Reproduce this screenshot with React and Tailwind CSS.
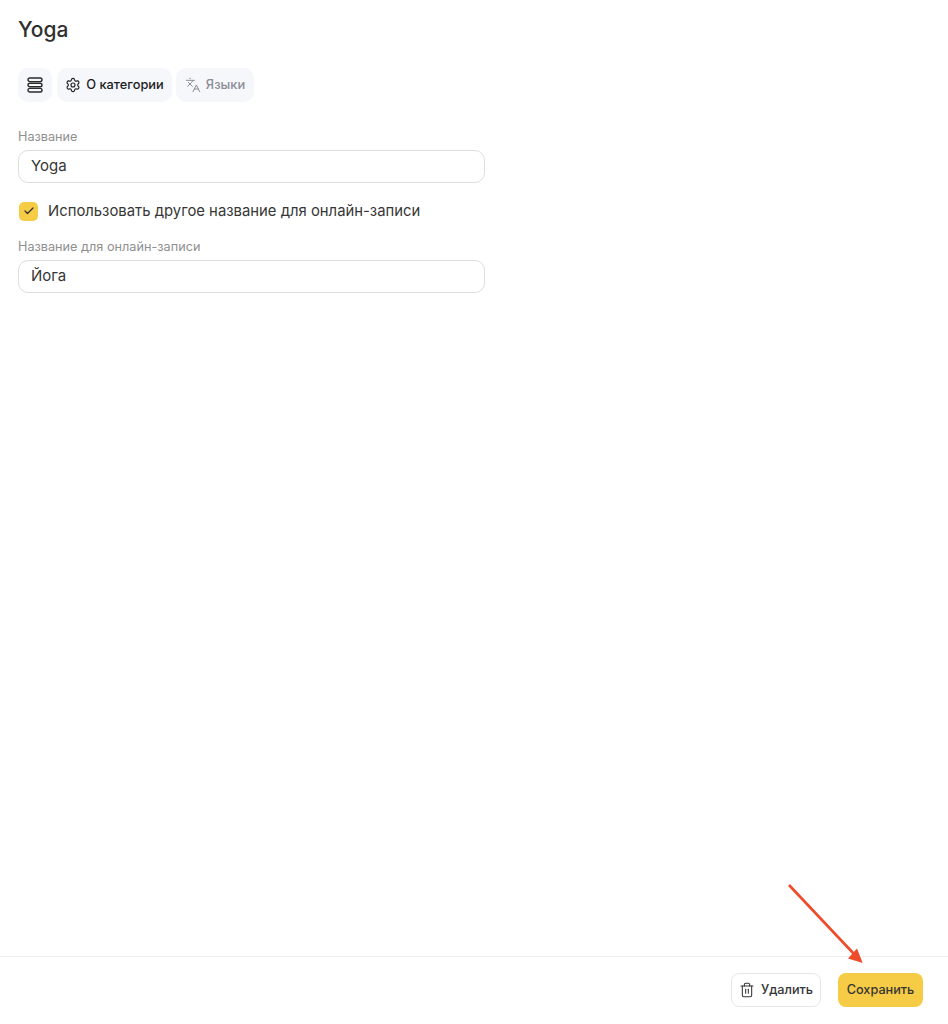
import React from "react";
import { Check, Languages, Settings, Trash2 } from "lucide-react";

function StackIcon() {
  return (
    <svg width="16" height="16" viewBox="0 0 16 16" fill="none" stroke="currentColor" strokeWidth="1.4">
      <rect x="1" y="1" width="14" height="3.6" rx="1.8" />
      <rect x="1" y="6.2" width="14" height="3.6" rx="1.8" />
      <rect x="1" y="11.4" width="14" height="3.6" rx="1.8" />
    </svg>
  );
}

function Field({ label, value }) {
  return (
    <div className="w-[467px]">
      <div className="h-[20px] pt-px text-[12.7px] leading-[20px] text-[#8f8f8f]">{label}</div>
      <div className="mt-[4px] flex h-[33px] items-center rounded-[10px] border border-[#dedede] bg-white px-[12px] text-[15px] text-[#363636]">
        {value}
      </div>
    </div>
  );
}

export default function App() {
  return (
    <div className="relative flex h-[1024px] flex-col bg-white font-['Inter',sans-serif] text-[#363636]">
      <main className="flex-1 px-[18px] pt-[16px]">
        <h1 className="h-[28px] text-[21px] font-medium leading-[28px] text-[#303030]">Yoga</h1>

        <div className="mt-[24px] flex h-[34px] gap-[4px]">
          <button className="flex w-[34px] items-center justify-center rounded-[10px] bg-[#f6f7fb] text-[#2b2b2b]">
            <StackIcon />
          </button>
          <button className="ml-px flex w-[115px] items-center justify-center gap-[5px] rounded-[10px] bg-[#f6f7fb] text-[12.8px] font-medium text-[#1c1c1c]">
            <Settings size={16} strokeWidth={1.7} />
            О категории
          </button>
          <button className="flex w-[78px] items-center justify-center gap-[5px] rounded-[10px] bg-[#f6f7fb] text-[12.8px] font-medium text-[#8b8d98]">
            <Languages size={16} strokeWidth={1.5} />
            Языки
          </button>
        </div>

        <div className="mt-[24px]">
          <Field label="Название" value="Yoga" />
        </div>

        <label className="mt-[18px] flex h-[20px] items-center gap-[10px] pl-px text-[14.85px]">
          <span className="flex h-[19px] w-[19px] items-center justify-center rounded-[5px] bg-[#f6cb45] text-[#2b2b2b]">
            <Check size={12} strokeWidth={2.4} />
          </span>
          Использовать другое название для онлайн-записи
        </label>

        <div className="mt-[15px]">
          <Field label="Название для онлайн-записи" value="Йога" />
        </div>
      </main>

      <footer className="flex h-[68px] items-start justify-end gap-[17px] border-t border-[#eeeeee] pr-[25px] pt-[16px]">
        <button className="flex h-[34px] w-[90px] items-center justify-center gap-[6px] rounded-[8px] border border-[#e6e6e6] bg-white text-[12.7px] font-medium text-[#363636]">
          <Trash2 size={16} strokeWidth={1.6} />
          Удалить
        </button>
        <button className="flex h-[34px] w-[85px] items-center justify-center rounded-[8px] bg-[#f6cb45] text-[12.7px] font-medium text-[#363636]">
          Сохранить
        </button>
      </footer>

      {/* annotation arrow over the save button */}
      <svg className="absolute left-[780px] top-[880px]" width="90" height="90" viewBox="0 0 90 90" fill="none">
        <path d="M9 5 L74 74" stroke="#ee4b2b" strokeWidth="2.6" />
        <path d="M82.7 83 L68 78.5 L77 68.5 Z" fill="#ee4b2b" />
      </svg>
    </div>
  );
}
